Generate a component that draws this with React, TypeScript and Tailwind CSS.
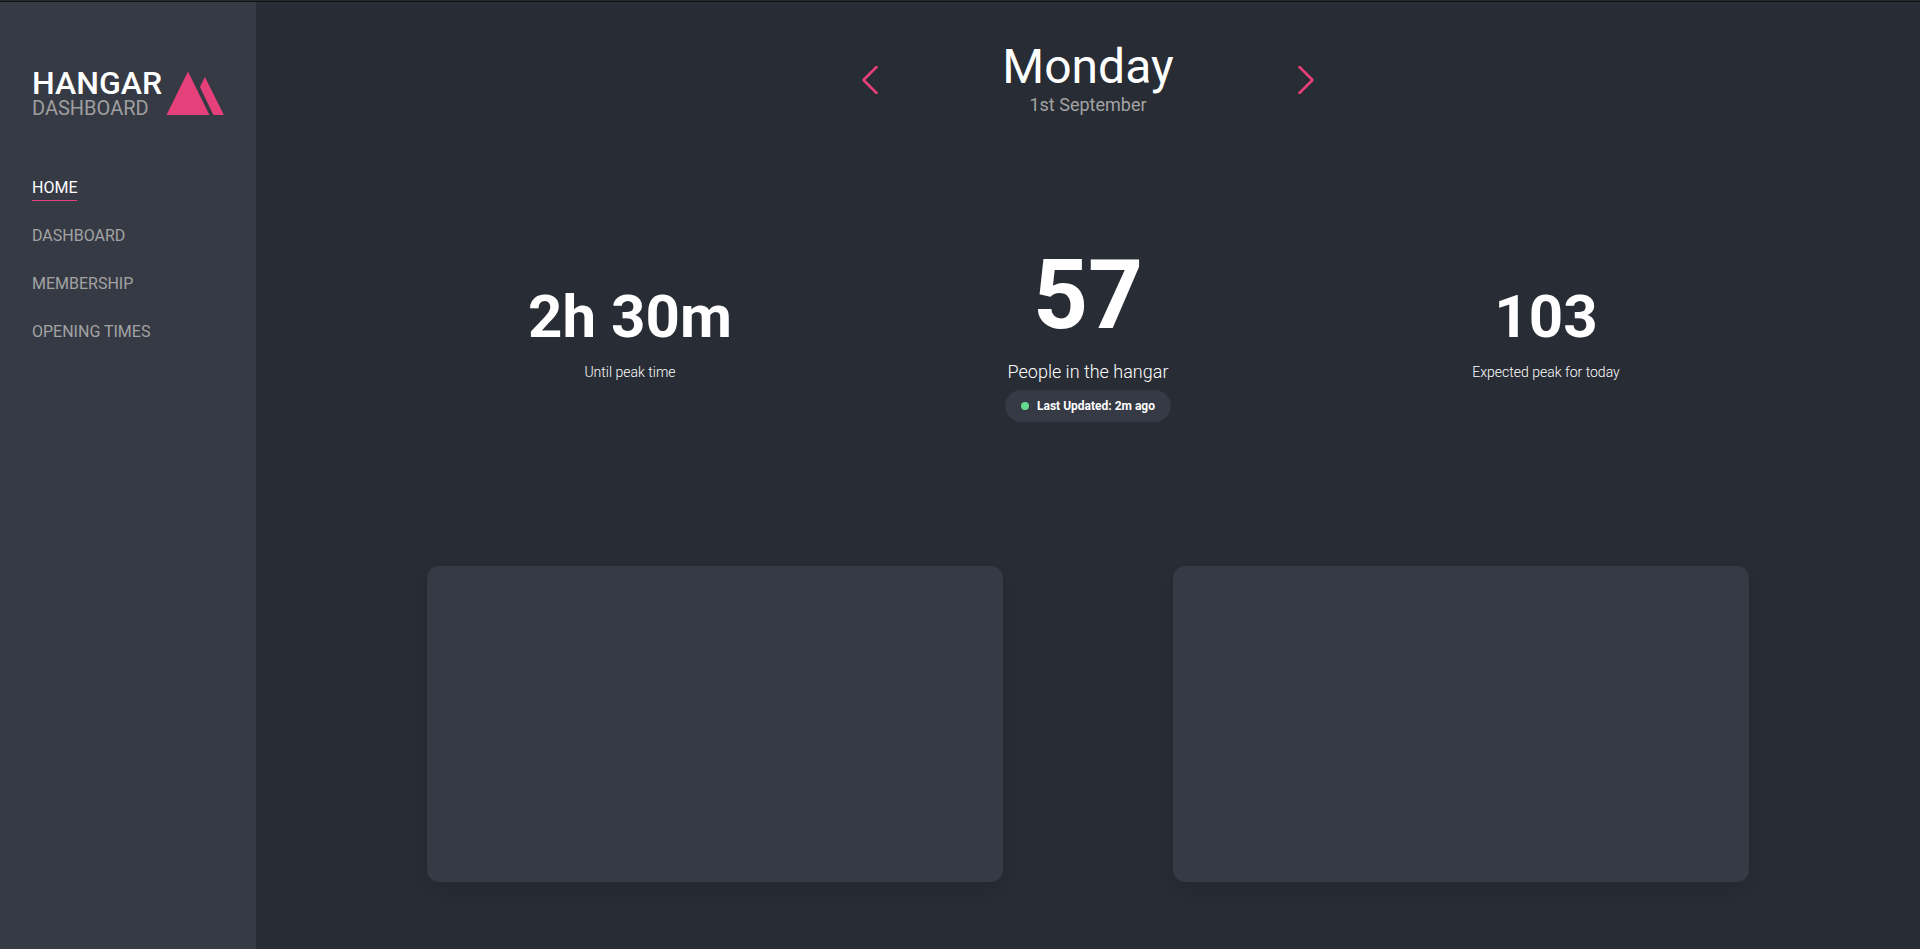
import React from "react";

const NAV_ITEMS = ["Home", "Dashboard", "Membership", "Opening Times"];

function Logo() {
  return (
    <a href="#home" className="flex items-end gap-1">
      <span className="flex flex-col">
        <span className="text-[32px] font-medium leading-8 text-white">HANGAR</span>
        <span className="text-xl leading-[18px] text-[#9f9f9f]">DASHBOARD</span>
      </span>
      <svg width="58" height="44" viewBox="0 0 58 44" fill="#e5407a" aria-hidden="true" className="mb-0.5">
        <path d="M22 0.5 43.5 44H0.5Z" />
        <path d="M39 6 58 44H47.5L34 16Z" />
      </svg>
    </a>
  );
}

function Sidebar() {
  return (
    <aside className="flex w-64 shrink-0 flex-col gap-[58px] bg-[#363a45] px-8 pt-[65px]">
      <Logo />
      <nav className="flex flex-col items-start gap-[22px]">
        {NAV_ITEMS.map((item, i) => (
          <a
            key={item}
            href={"#" + item.toLowerCase().replace(" ", "-")}
            className={
              i === 0
                ? "border-b border-[#e5407a] text-base leading-[25px] uppercase text-white"
                : "border-b border-transparent text-base leading-[25px] uppercase text-[#a3a3a3]"
            }
          >
            {item}
          </a>
        ))}
      </nav>
    </aside>
  );
}

function DayButton({ label, points }: { label: string; points: string }) {
  return (
    <button type="button" aria-label={label} className="cursor-pointer">
      <svg width="16" height="28" viewBox="0 0 16 28" fill="none" stroke="#e5407a" strokeWidth="2.5" strokeLinecap="round" strokeLinejoin="round">
        <polyline points={points} />
      </svg>
    </button>
  );
}

function DayPicker() {
  return (
    <header className="flex items-center justify-center pt-10">
      <DayButton label="Previous day" points="14.5,1 1.5,14 14.5,27" />
      <div className="flex w-[420px] flex-col items-center">
        <h1 className="text-5xl leading-[50px] text-white">Monday</h1>
        <p className="text-lg leading-[26px] text-[#a3a3a3]">1st September</p>
      </div>
      <DayButton label="Next day" points="1.5,1 14.5,14 1.5,27" />
    </header>
  );
}

function Stat({ value, label }: { value: string; label: string }) {
  return (
    <div className="flex flex-col items-center pt-[42px]">
      <p className="text-6xl leading-[72px] font-bold">{value}</p>
      <p className="pt-[7px] text-sm leading-6 font-light">{label}</p>
    </div>
  );
}

function Stats() {
  return (
    <section className="grid grid-cols-3 px-[145px] pt-[121px] text-white">
      <Stat value="2h 30m" label="Until peak time" />
      <div className="flex flex-col items-center">
        <p className="text-8xl leading-[112px] font-bold">57</p>
        <p className="pt-[5px] text-lg leading-8 font-light">People in the hangar</p>
        <p className="mt-0.5 flex h-8 items-center gap-2 rounded-full bg-[#363a45] px-4 text-xs font-bold">
          <span className="size-2 rounded-full bg-[#63dc90]" />
          Last Updated: 2m ago
        </p>
      </div>
      <Stat value="103" label="Expected peak for today" />
    </section>
  );
}

function Card() {
  return <div className="h-[316px] w-xl rounded-xl bg-[#363a45] shadow-[0_8px_16px_rgba(0,0,0,0.1)]" />;
}

export default function App() {
  return (
    <div className="flex min-h-screen flex-col border-t border-[#292a2d] bg-[#282c34] font-['Roboto',sans-serif]">
      <div className="flex grow border-t border-[#101114]">
        <Sidebar />
        <main className="flex grow flex-col">
          <DayPicker />
          <Stats />
          <section className="flex justify-evenly pt-36 pb-10">
            <Card />
            <Card />
          </section>
        </main>
      </div>
    </div>
  );
}
